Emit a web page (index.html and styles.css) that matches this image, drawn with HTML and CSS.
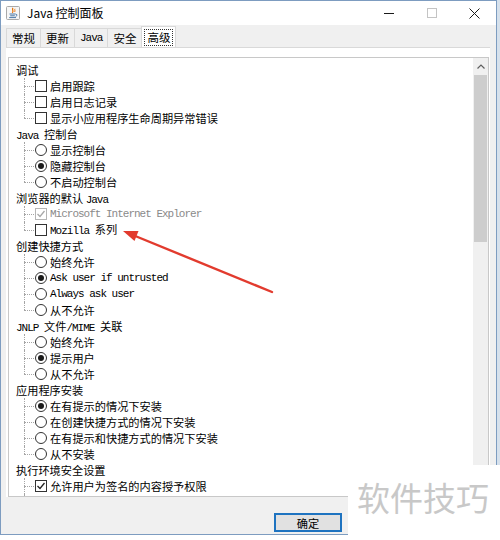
FILE: index.html
```html
<!DOCTYPE html>
<html lang="zh-CN">
<head>
<meta charset="utf-8">
<title>Java 控制面板</title>
<link rel="stylesheet" href="styles.css">
</head>
<body>
<div class="screen">
  <div class="window">
    <div class="titlebar">
      <svg class="app-icon" width="14" height="14" viewBox="0 0 14 14">
        <rect x="0.5" y="0.5" width="13" height="13" rx="1" fill="#f6f6f6" stroke="#a9a9a9"/>
        <path d="M7 1.8C5.2 3.6 8.4 4.6 6.3 6.8" stroke="#e76f00" fill="none" stroke-width="1.2"/>
        <path d="M9 2.8C8.2 3.8 9.6 4.6 8.6 6" stroke="#e76f00" fill="none" stroke-width="0.9"/>
        <path d="M3.5 8H9.5M4.2 9.8H8.8M3.2 11.6H10" stroke="#4a78a8" stroke-width="1"/>
        <path d="M9.6 8.2q2 0 1.2 1.6l-1.2 0.6" stroke="#4a78a8" fill="none" stroke-width="0.9"/>
      </svg>
      <span class="title">Java 控制面板</span>
      <div class="controls">
        <div class="ctl"><svg width="10" height="10" viewBox="0 0 10 10"><path d="M0 5.5H10" stroke="#1a1a1a" stroke-width="1"/></svg></div>
        <div class="ctl"><svg width="10" height="10" viewBox="0 0 10 10"><rect x="0.5" y="0.5" width="9" height="9" fill="none" stroke="#c4c4c4"/></svg></div>
        <div class="ctl"><svg width="11" height="11" viewBox="0 0 11 11"><path d="M0.5 0.5L10.5 10.5M10.5 0.5L0.5 10.5" stroke="#1a1a1a" stroke-width="1"/></svg></div>
      </div>
    </div>

    <div class="tabs">
      <div class="tab">常规</div>
      <div class="tab">更新</div>
      <div class="tab"><span class="mono">Java</span></div>
      <div class="tab">安全</div>
      <div class="tab active"><span class="focus">高级</span></div>
    </div>

    <div class="tabpanel">
      <div class="scrollpane">
        <div class="tree">
          <div class="group">
            <div class="head">调试</div>
            <div class="children">
              <div class="item"><span class="cb"></span><span>启用跟踪</span></div>
              <div class="item"><span class="cb"></span><span>启用日志记录</span></div>
              <div class="item"><span class="cb"></span><span>显示小应用程序生命周期异常错误</span></div>
            </div>
          </div>
          <div class="group">
            <div class="head"><span class="mono">Java </span>控制台</div>
            <div class="children">
              <div class="item"><span class="rb"></span><span>显示控制台</span></div>
              <div class="item"><span class="rb on"></span><span>隐藏控制台</span></div>
              <div class="item"><span class="rb"></span><span>不启动控制台</span></div>
            </div>
          </div>
          <div class="group">
            <div class="head">浏览器的默认 <span class="mono">Java</span></div>
            <div class="children">
              <div class="item disabled"><span class="cb"><svg width="10" height="10" viewBox="0 0 10 10"><path d="M1.5 5L4 7.5L8.5 2" stroke="#a8a8a8" stroke-width="1.3" fill="none"/></svg></span><span class="mono">Microsoft Internet Explorer</span></div>
              <div class="item"><span class="cb"></span><span><span class="mono">Mozilla </span>系列</span></div>
            </div>
          </div>
          <div class="group">
            <div class="head">创建快捷方式</div>
            <div class="children">
              <div class="item"><span class="rb"></span><span>始终允许</span></div>
              <div class="item"><span class="rb on"></span><span class="mono">Ask user if untrusted</span></div>
              <div class="item"><span class="rb"></span><span class="mono">Always ask user</span></div>
              <div class="item"><span class="rb"></span><span>从不允许</span></div>
            </div>
          </div>
          <div class="group">
            <div class="head"><span class="mono">JNLP </span>文件<span class="mono">/MIME </span>关联</div>
            <div class="children">
              <div class="item"><span class="rb"></span><span>始终允许</span></div>
              <div class="item"><span class="rb on"></span><span>提示用户</span></div>
              <div class="item"><span class="rb"></span><span>从不允许</span></div>
            </div>
          </div>
          <div class="group">
            <div class="head">应用程序安装</div>
            <div class="children">
              <div class="item"><span class="rb on"></span><span>在有提示的情况下安装</span></div>
              <div class="item"><span class="rb"></span><span>在创建快捷方式的情况下安装</span></div>
              <div class="item"><span class="rb"></span><span>在有提示和快捷方式的情况下安装</span></div>
              <div class="item"><span class="rb"></span><span>从不安装</span></div>
            </div>
          </div>
          <div class="group">
            <div class="head">执行环境安全设置</div>
            <div class="children">
              <div class="item"><span class="cb"><svg width="10" height="10" viewBox="0 0 10 10"><path d="M1.5 5L4 7.5L8.5 2" stroke="#222" stroke-width="1.3" fill="none"/></svg></span><span>允许用户为签名的内容授予权限</span></div>
              <div class="item"><span class="cb"></span></div>
            </div>
          </div>
        </div>
        <div class="vscroll">
          <div class="up-btn"><svg width="8" height="5" viewBox="0 0 8 5"><path d="M0.5 4.5L4 1L7.5 4.5" stroke="#606060" stroke-width="1.2" fill="none"/></svg></div>
          <div class="thumb"></div>
        </div>
      </div>
    </div>

    <div class="buttons">
      <button class="btn default">确定</button>
      <button class="btn" aria-label="取消"></button>
      <button class="btn" aria-label="应用"></button>
    </div>
  </div>
  <div class="side"></div>
</div>

<svg class="annotation" width="500" height="540" viewBox="0 0 500 540">
  <line x1="272" y1="292" x2="134" y2="235.5" stroke="#e23b2e" stroke-width="2.4" stroke-linecap="round"/>
  <polygon points="123,231 138.5,231 134.5,241" fill="#e23b2e"/>
</svg>
<div class="watermark">软件技巧</div>
</body>
</html>
```
FILE: styles.css
```css
* { box-sizing: border-box; }

html, body {
  margin: 0;
  padding: 0;
}

body {
  width: 500px;
  height: 540px;
  overflow: hidden;
  background: #ffffff;
  font-family: "Noto Sans CJK SC", "Noto Sans", sans-serif;
  font-size: 11.2px;
  color: #000;
  position: relative;
}

.screen {
  display: flex;
  height: 535px;
}

.window {
  width: 497px;
  height: 535px;
  border: 1px solid #7d9cc0;
  background: #f0f0f0;
  display: flex;
  flex-direction: column;
}

.side {
  flex: 1;
  background: #d6e1ec;
}

/* title bar */
.titlebar {
  height: 24px;
  background: #ffffff;
  display: flex;
  align-items: center;
  padding-left: 5px;
}

.app-icon { display: block; }

.title {
  margin-left: 7px;
  font-size: 12px;
  line-height: 24px;
}

.controls {
  margin-left: auto;
  display: flex;
  height: 24px;
}

.ctl {
  width: 43px;
  height: 24px;
  display: flex;
  align-items: center;
  justify-content: center;
}

.ctl svg { display: block; }

/* tabs */
.tabs {
  height: 22px;
  display: flex;
  align-items: flex-end;
  padding-left: 5px;
}

.tab {
  height: 19px;
  padding: 0 5px;
  border: 1px solid #d9d9d9;
  border-bottom: none;
  margin-right: -1px;
  background: #f0f0f0;
  display: flex;
  align-items: center;
  font-size: 11.5px;
  line-height: 17px;
}

.tab.active {
  height: 21px;
  padding: 0 2px;
  background: #ffffff;
  position: relative;
  z-index: 1;
}

.focus {
  border: 1px dotted #333;
  padding: 0 2px;
  line-height: 15px;
}

.mono {
  font-family: "Liberation Mono", "DejaVu Sans Mono", monospace;
  font-size: 11px;
  letter-spacing: -1px;
  white-space: pre;
}

/* tab panel */
.tabpanel {
  margin-left: 5px;
  width: 484px;
  background: #ffffff;
  border-top: 1px solid #d9d9d9;
  padding: 9px 0 0 2px;
}

.scrollpane {
  width: 481px;
  height: 440px;
  border: 1px solid #c8c8c8;
  background: #ffffff;
  display: flex;
  overflow: hidden;
}

.tree {
  flex: 1;
  padding-top: 4px;
  overflow: hidden;
}

.head {
  height: 16px;
  line-height: 16px;
  padding-left: 7px;
  white-space: nowrap;
}

.item {
  position: relative;
  height: 16px;
  line-height: 16px;
  padding-left: 26px;
  display: flex;
  align-items: center;
  white-space: nowrap;
}

.item::before {
  content: "";
  position: absolute;
  left: 15px;
  top: 8px;
  width: 10px;
  border-top: 1px dotted #a5a5a5;
}

.item::after {
  content: "";
  position: absolute;
  left: 15px;
  top: 0;
  height: 16px;
  border-left: 1px dotted #a5a5a5;
}

.item:last-child::after { height: 8px; }

.cb {
  width: 12px;
  height: 12px;
  border: 1px solid #333;
  background: #fff;
  margin-right: 3px;
  flex: none;
  display: flex;
  align-items: center;
  justify-content: center;
}

.cb svg { display: block; }

.rb {
  width: 12px;
  height: 12px;
  border: 1px solid #333;
  border-radius: 50%;
  background: #fff;
  margin-right: 3px;
  flex: none;
  display: flex;
  align-items: center;
  justify-content: center;
}

.rb.on::after {
  content: "";
  width: 6px;
  height: 6px;
  border-radius: 50%;
  background: #1a1a1a;
}

.item.disabled { color: #8a8a8a; }
.item.disabled .cb { border-color: #b5b5b5; }

/* scrollbar */
.vscroll {
  width: 15px;
  background: #f0f0f0;
  display: flex;
  flex-direction: column;
}

.up-btn {
  height: 17px;
  display: flex;
  align-items: center;
  justify-content: center;
}

.up-btn svg { display: block; }

.thumb {
  margin: 0 1px;
  height: 167px;
  background: #cdcdcd;
}

/* bottom buttons */
.buttons {
  flex: 1;
  display: flex;
  justify-content: flex-end;
  align-items: flex-start;
  gap: 6px;
  padding: 16px 6px 0 0;
}

.btn {
  width: 68px;
  height: 19px;
  padding: 0;
  border: 1px solid #adadad;
  background: #e1e1e1;
  font-family: "Noto Sans CJK SC", sans-serif;
  font-size: 11.2px;
  line-height: 16px;
  color: #000;
}

.btn.default {
  border-color: #1e73c0;
  box-shadow: inset 0 0 0 1px #1e73c0;
}

/* overlays */
.annotation {
  position: absolute;
  left: 0;
  top: 0;
  pointer-events: none;
}

.watermark {
  position: absolute;
  left: 348px;
  top: 465px;
  width: 152px;
  height: 75px;
  background: #ffffff;
  padding: 12px 0 0 9px;
  font-size: 33px;
  line-height: 40px;
  color: #c8c8c8;
  white-space: nowrap;
}
```
